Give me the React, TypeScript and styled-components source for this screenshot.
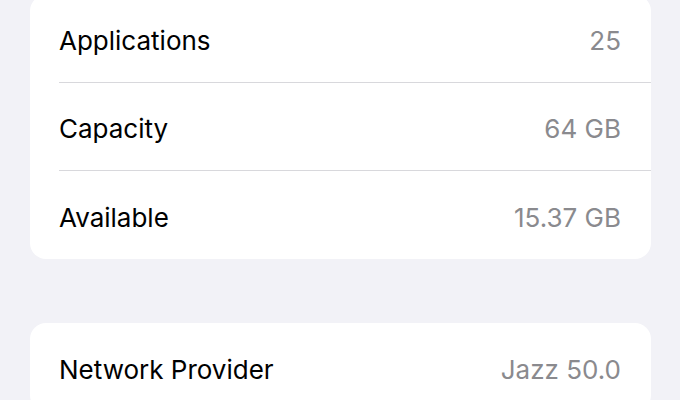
import React, { ReactElement } from "react";
import styled, { createGlobalStyle } from "styled-components";

const GlobalStyle = createGlobalStyle`
	html, body {
		margin: 0;
		padding: 0;
		background: #f2f2f7;
	}
	body {
		font-family: Inter, "Liberation Sans", sans-serif;
		-webkit-font-smoothing: antialiased;
	}
`;

const Page = styled.div`
	width: 680px;
	height: 400px;
	overflow: hidden;
	background: #f2f2f7;
	display: flex;
	flex-direction: column;
	gap: 64px;
	box-sizing: border-box;
	padding: 0 29px 0 30px;
`;

const Card = styled.div<{ $first?: boolean }>`
	background: #ffffff;
	border-radius: 16px;
	margin-top: ${(p) => (p.$first ? "-5px" : "0")};
	display: flex;
	flex-direction: column;
	padding-left: 29px;
	flex-shrink: 0;
`;

const Row = styled.div<{ $last?: boolean }>`
	height: 88px;
	box-sizing: border-box;
	display: flex;
	align-items: center;
	justify-content: space-between;
	padding: 4px 30px 0 0;
	border-bottom: ${(p) => (p.$last ? "none" : "1px solid #d8d8dc")};
`;

const Label = styled.span`
	font-size: 26px;
	color: #000000;
`;

const Value = styled.span`
	font-size: 26px;
	color: #8a8a8e;
`;

type Item = { label: string; value: string };

const storage: Item[] = [
	{ label: "Applications", value: "25" },
	{ label: "Capacity", value: "64 GB" },
	{ label: "Available", value: "15.37 GB" },
];

const network: Item[] = [{ label: "Network Provider", value: "Jazz 50.0" }];

function Group({ items, first }: { items: Item[]; first?: boolean }): ReactElement {
	return (
		<Card $first={first}>
			{items.map((item, i) => (
				<Row key={item.label} $last={i === items.length - 1}>
					<Label>{item.label}</Label>
					<Value>{item.value}</Value>
				</Row>
			))}
		</Card>
	);
}

export default function App(): ReactElement {
	return (
		<>
			<GlobalStyle />
			<Page>
				<Group items={storage} first />
				<Group items={network} />
			</Page>
		</>
	);
}
